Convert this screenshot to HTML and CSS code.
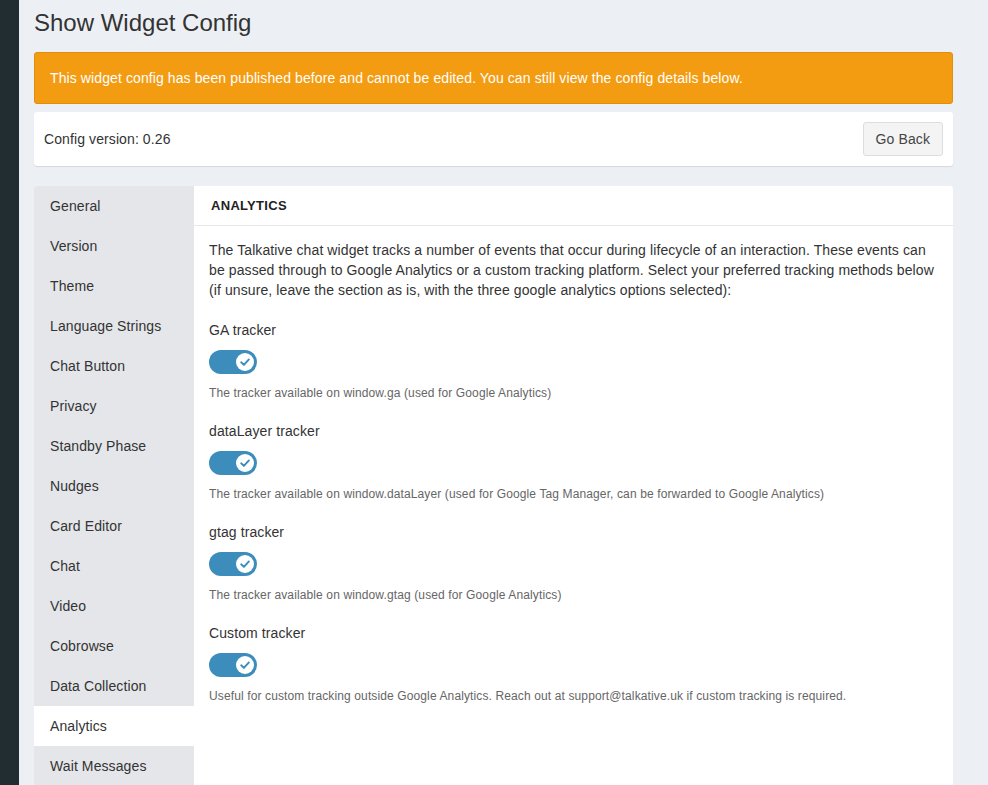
FILE: index.html
```html
<!DOCTYPE html>
<html lang="en">
<head>
<meta charset="utf-8">
<title>Show Widget Config</title>
<link rel="stylesheet" href="styles.css">
</head>
<body>
<div class="app">
  <aside class="rail"></aside>
  <main class="content">
    <h1 class="page-title">Show Widget Config</h1>
    <div class="alert">This widget config has been published before and cannot be edited. You can still view the config details below.</div>
    <div class="version-bar">
      <span>Config version: 0.26</span>
      <button class="btn" type="button">Go Back</button>
    </div>
    <div class="panel">
      <nav class="tabs">
        <a class="tab">General</a>
        <a class="tab">Version</a>
        <a class="tab">Theme</a>
        <a class="tab">Language Strings</a>
        <a class="tab">Chat Button</a>
        <a class="tab">Privacy</a>
        <a class="tab">Standby Phase</a>
        <a class="tab">Nudges</a>
        <a class="tab">Card Editor</a>
        <a class="tab">Chat</a>
        <a class="tab">Video</a>
        <a class="tab">Cobrowse</a>
        <a class="tab">Data Collection</a>
        <a class="tab active">Analytics</a>
        <a class="tab">Wait Messages</a>
      </nav>
      <section class="pane">
        <header class="pane-header">ANALYTICS</header>
        <div class="pane-body">
          <p class="intro">The Talkative chat widget tracks a number of events that occur during lifecycle of an interaction. These events can be passed through to Google Analytics or a custom tracking platform. Select your preferred tracking methods below (if unsure, leave the section as is, with the three google analytics options selected):</p>
          <div class="field">
            <div class="label">GA tracker</div>
            <span class="toggle"><span class="knob"><svg viewBox="0 0 18 18" width="18" height="18"><path d="M5.2 9.3 L7.9 11.9 L12.9 6.4" fill="none" stroke="#3c8dbc" stroke-width="1.9" stroke-linecap="round" stroke-linejoin="round"/></svg></span></span>
            <div class="help">The tracker available on window.ga (used for Google Analytics)</div>
          </div>
          <div class="field">
            <div class="label">dataLayer tracker</div>
            <span class="toggle"><span class="knob"><svg viewBox="0 0 18 18" width="18" height="18"><path d="M5.2 9.3 L7.9 11.9 L12.9 6.4" fill="none" stroke="#3c8dbc" stroke-width="1.9" stroke-linecap="round" stroke-linejoin="round"/></svg></span></span>
            <div class="help">The tracker available on window.dataLayer (used for Google Tag Manager, can be forwarded to Google Analytics)</div>
          </div>
          <div class="field">
            <div class="label">gtag tracker</div>
            <span class="toggle"><span class="knob"><svg viewBox="0 0 18 18" width="18" height="18"><path d="M5.2 9.3 L7.9 11.9 L12.9 6.4" fill="none" stroke="#3c8dbc" stroke-width="1.9" stroke-linecap="round" stroke-linejoin="round"/></svg></span></span>
            <div class="help">The tracker available on window.gtag (used for Google Analytics)</div>
          </div>
          <div class="field">
            <div class="label">Custom tracker</div>
            <span class="toggle"><span class="knob"><svg viewBox="0 0 18 18" width="18" height="18"><path d="M5.2 9.3 L7.9 11.9 L12.9 6.4" fill="none" stroke="#3c8dbc" stroke-width="1.9" stroke-linecap="round" stroke-linejoin="round"/></svg></span></span>
            <div class="help">Useful for custom tracking outside Google Analytics. Reach out at support@talkative.uk if custom tracking is required.</div>
          </div>
        </div>
      </section>
    </div>
  </main>
</div>
</body>
</html>
```

FILE: styles.css
```css
* { box-sizing: border-box; }
html, body {
  margin: 0;
  padding: 0;
  background: #ecf0f5;
  font-family: "Liberation Sans", Arial, sans-serif;
  font-size: 14px;
  color: #333;
}
.app {
  display: flex;
  min-height: 100vh;
}
.rail {
  width: 19px;
  flex: 0 0 19px;
  background: #222d32;
}
.content {
  flex: 1;
  padding: 10px 35px 0 15px;
  letter-spacing: 0.1px;
}
.page-title {
  margin: 0 0 16px;
  font-size: 24px;
  font-weight: 400;
  line-height: 26px;
  letter-spacing: 0;
  color: #333;
}
.alert {
  background: #f39c12;
  border: 1px solid #e08e0b;
  border-radius: 3px;
  color: #fff;
  padding: 15px;
  line-height: 20px;
}
.version-bar {
  margin-top: 8px;
  background: #fff;
  border-radius: 3px;
  box-shadow: 0 1px 1px rgba(0,0,0,0.1);
  padding: 10px;
  display: flex;
  align-items: center;
  justify-content: space-between;
  line-height: 20px;
}
.btn {
  font-family: inherit;
  font-size: 14px;
  letter-spacing: 0.1px;
  color: #444;
  background: #f4f4f4;
  border: 1px solid #ddd;
  border-radius: 3px;
  padding: 6px 12px;
  line-height: 20px;
}
.panel {
  margin-top: 20px;
  display: flex;
  background: #fff;
  border-radius: 3px;
  overflow: hidden;
}
.tabs {
  width: 160px;
  flex: 0 0 160px;
  background: #e4e6ea;
  display: flex;
  flex-direction: column;
}
.tab {
  height: 40px;
  line-height: 40px;
  padding-left: 16px;
  color: #333;
  white-space: nowrap;
}
.tab.active { background: #fff; }
.pane { flex: 1; }
.pane-header {
  height: 40px;
  line-height: 40px;
  padding-left: 17px;
  font-size: 13px;
  font-weight: 700;
  letter-spacing: 0.3px;
  color: #222;
  border-bottom: 1px solid #e8e8e8;
}
.pane-body { padding: 14px 15px 20px 15px; }
.intro {
  margin: 0 0 20px;
  line-height: 20px;
}
.field { margin-bottom: 19px; }
.label { line-height: 20px; }
.toggle {
  display: flex;
  justify-content: flex-end;
  align-items: center;
  width: 48px;
  height: 24px;
  margin-top: 10px;
  padding-right: 3px;
  border-radius: 12px;
  background: #3c8dbc;
}
.knob {
  width: 18px;
  height: 18px;
  border-radius: 50%;
  background: #fff;
  display: flex;
}
.help {
  margin-top: 11px;
  font-size: 12px;
  line-height: 17px;
  letter-spacing: 0.12px;
  color: #666;
}
```
